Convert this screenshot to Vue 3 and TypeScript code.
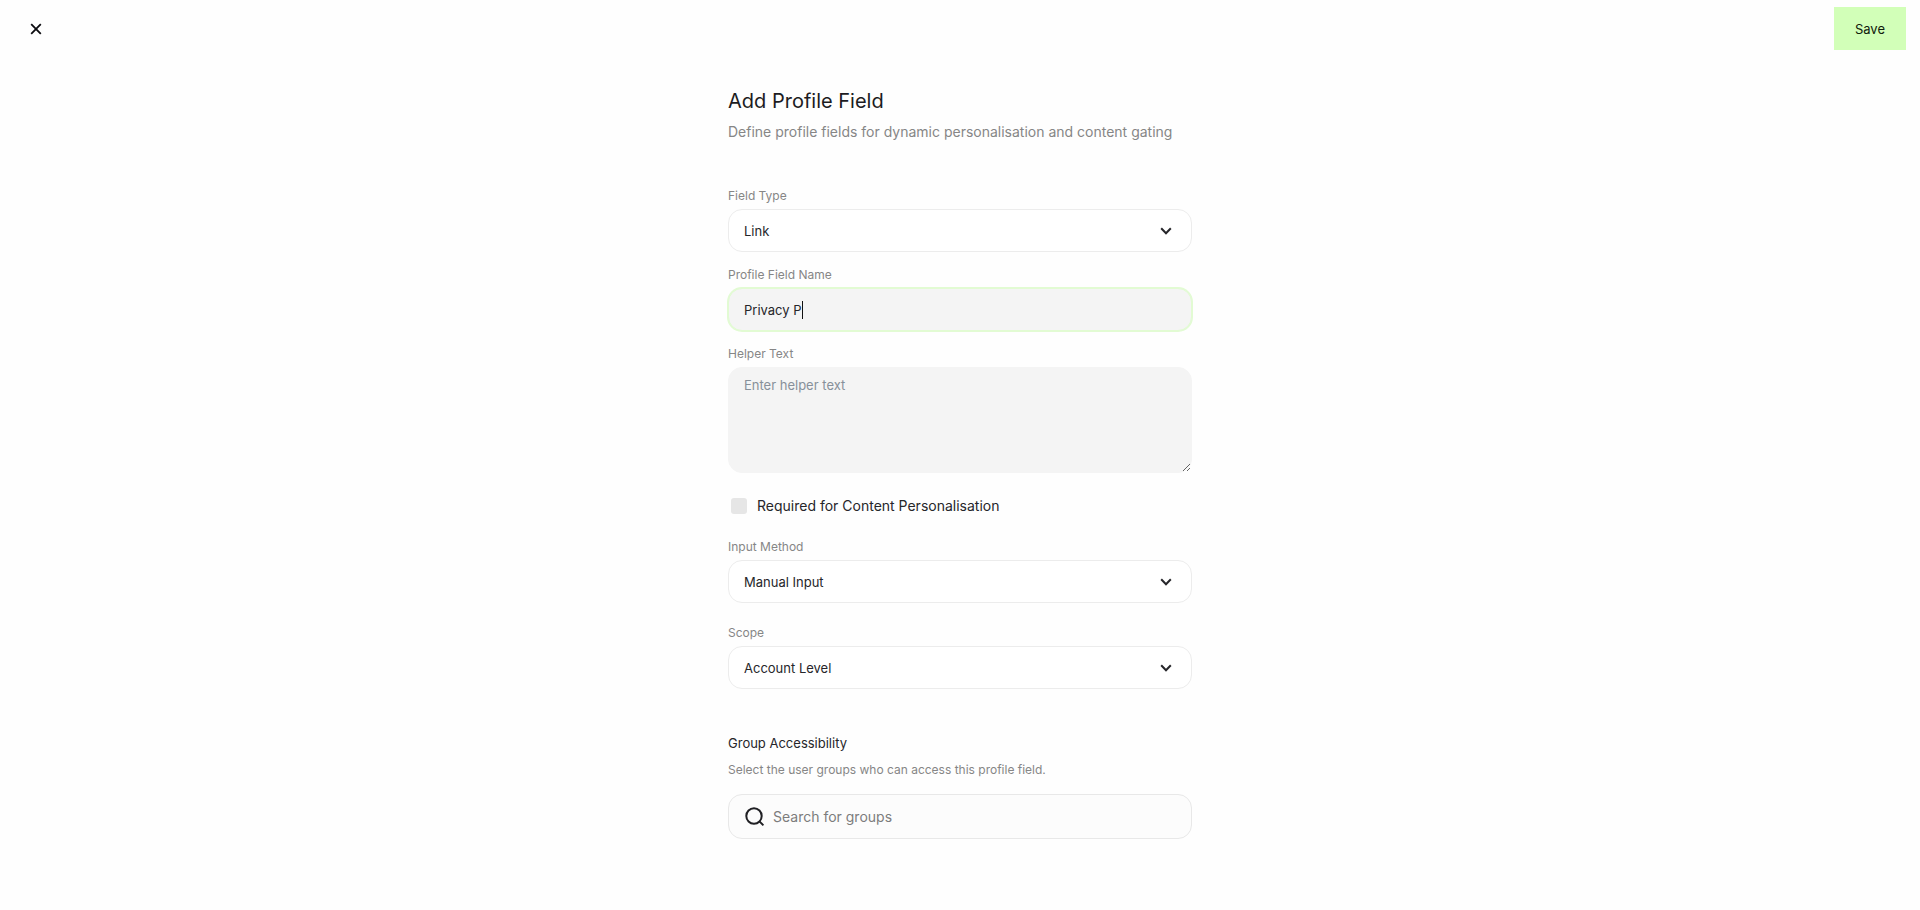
<script setup lang="ts">
import { onMounted, ref } from 'vue'

const fieldType = ref('Link')
const fieldName = ref('Privacy P')
const helperText = ref('')
const required = ref(false)
const inputMethod = ref('Manual Input')
const scope = ref('Account Level')
const groupSearch = ref('')

const fieldTypes: string[] = ['Link', 'Text', 'Number', 'Date']
const inputMethods: string[] = ['Manual Input', 'Automatic']
const scopes: string[] = ['Account Level', 'User Level']

const nameInput = ref<HTMLInputElement | null>(null)

onMounted(() => {
  const el = nameInput.value
  if (!el) return
  el.focus()
  el.setSelectionRange(el.value.length, el.value.length)
})
</script>

<template>
  <div class="page">
    <header class="topbar">
      <button class="close" type="button" aria-label="Close">
        <svg width="12" height="12" viewBox="0 0 12 12" aria-hidden="true">
          <path d="M1.2 1.2 10.8 10.8M10.8 1.2 1.2 10.8" fill="none" stroke="#0b0b0f" stroke-width="1.8" />
        </svg>
      </button>
      <button class="save" type="submit" form="profile-field">Save</button>
    </header>

    <form id="profile-field" class="form" @submit.prevent>
      <h1>Add Profile Field</h1>
      <p class="intro">Define profile fields for dynamic personalisation and content gating</p>

      <div class="field">
        <label for="type">Field Type</label>
        <div class="control">
          <select id="type" v-model="fieldType" class="box">
            <option v-for="o in fieldTypes" :key="o">{{ o }}</option>
          </select>
          <svg class="chevron" width="12" height="8" viewBox="0 0 12 8" aria-hidden="true">
            <path d="M1.2 1.2 6 6.2 10.8 1.2" />
          </svg>
        </div>
      </div>

      <div class="field">
        <label for="name">Profile Field Name</label>
        <div class="control">
          <input id="name" ref="nameInput" v-model="fieldName" class="box active" type="text" autocomplete="off" spellcheck="false" />
          <span class="caret-line" aria-hidden="true"><span class="ghost">{{ fieldName }}</span><span class="caret"></span></span>
        </div>
      </div>

      <div class="field">
        <label for="helper">Helper Text</label>
        <textarea id="helper" v-model="helperText" class="box" placeholder="Enter helper text"></textarea>
      </div>

      <div class="check">
        <input id="required" v-model="required" type="checkbox" />
        <label for="required">Required for Content Personalisation</label>
      </div>

      <div class="field method">
        <label for="method">Input Method</label>
        <div class="control">
          <select id="method" v-model="inputMethod" class="box">
            <option v-for="o in inputMethods" :key="o">{{ o }}</option>
          </select>
          <svg class="chevron" width="12" height="8" viewBox="0 0 12 8" aria-hidden="true">
            <path d="M1.2 1.2 6 6.2 10.8 1.2" />
          </svg>
        </div>
      </div>

      <div class="field">
        <label for="scope">Scope</label>
        <div class="control">
          <select id="scope" v-model="scope" class="box">
            <option v-for="o in scopes" :key="o">{{ o }}</option>
          </select>
          <svg class="chevron" width="12" height="8" viewBox="0 0 12 8" aria-hidden="true">
            <path d="M1.2 1.2 6 6.2 10.8 1.2" />
          </svg>
        </div>
      </div>

      <section class="groups">
        <h2><label for="groups">Group Accessibility</label></h2>
        <p>Select the user groups who can access this profile field.</p>
        <div class="search">
          <svg width="20" height="20" viewBox="0 0 20 20" aria-hidden="true">
            <circle cx="9" cy="9" r="7.7" />
            <path d="M14.4 14.4 18.4 18.4" />
          </svg>
          <input id="groups" v-model="groupSearch" type="search" placeholder="Search for groups" />
        </div>
      </section>
    </form>
  </div>
</template>

<style>
body {
  margin: 0;
  background: #fefefe;
}
</style>

<style scoped>
.page,
.page * {
  box-sizing: border-box;
}
.page {
  min-height: 100vh;
  background: #fefefe;
  color: #26262a;
  font-family: Inter, "Liberation Sans", sans-serif;
  font-size: 14px;
}
button,
input,
select,
textarea {
  margin: 0;
  font: inherit;
  color: inherit;
}
.topbar {
  display: flex;
  align-items: flex-start;
  justify-content: space-between;
  padding: 7px 14px 0 24px;
}
.close {
  display: grid;
  place-items: center;
  width: 24px;
  height: 43px;
  padding: 0;
  border: 0;
  background: none;
  cursor: pointer;
}
.save {
  height: 43px;
  padding: 0 21px;
  border: 0;
  background: #d2ffb8;
  color: #10200c;
  font-size: 13px;
  cursor: pointer;
}
.form {
  width: 464px;
  max-width: 100%;
  margin: 0 auto;
  padding: 37px 0 48px;
}
h1 {
  margin: 0;
  font-size: 20px;
  line-height: 28px;
  font-weight: 400;
  color: #1c1c22;
}
.intro {
  margin: 7px 0 46px;
  font-size: 14px;
  line-height: 20px;
  color: #868686;
}
.field {
  display: flex;
  flex-direction: column;
  gap: 5px;
  margin-bottom: 15px;
}
.field > label {
  font-size: 12px;
  line-height: 16px;
  color: #868686;
}
.control {
  position: relative;
  font-size: 13px;
}
.box {
  display: block;
  width: 100%;
  height: 43px;
  padding: 0 15px;
  border: 1px solid #ececec;
  border-radius: 14px;
  background: #fff;
  outline: none;
  appearance: none;
}
.box.active {
  border-color: #e2fbd3;
  background: #f4f4f4;
  box-shadow: 0 0 0 1px #e2fbd3;
  caret-color: transparent;
}
.chevron {
  position: absolute;
  top: 18px;
  right: 20px;
  pointer-events: none;
}
.chevron path {
  fill: none;
  stroke: #26262a;
  stroke-width: 2;
}
.caret-line {
  position: absolute;
  inset: 0 16px;
  display: flex;
  align-items: center;
  overflow: hidden;
  pointer-events: none;
  white-space: pre;
}
.ghost {
  visibility: hidden;
}
.caret {
  width: 1px;
  height: 18px;
  background: #111;
}
textarea.box {
  height: 106px;
  padding: 7px 15px;
  border-color: #f4f4f4;
  background: #f4f4f4;
  font-size: 13px;
  line-height: 20px;
  resize: vertical;
}
textarea::placeholder {
  color: #87909a;
  opacity: 1;
}
.check {
  display: flex;
  align-items: center;
  gap: 10px;
  margin: 23px 0;
  padding-left: 3px;
  line-height: 20px;
}
.check input {
  width: 16px;
  height: 16px;
  border-radius: 3px;
  background: #e6e6e6;
  appearance: none;
}
.check input:checked {
  background: #7ccf4c;
}
.field.method {
  margin-bottom: 22px;
}
.groups {
  margin-top: 44px;
}
h2 {
  margin: 0;
  font-size: 13px;
  line-height: 20px;
  font-weight: 400;
}
.groups p {
  margin: 9px 0 16px;
  font-size: 12px;
  line-height: 16px;
  color: #868686;
}
.search {
  display: flex;
  align-items: center;
  gap: 8px;
  height: 45px;
  padding: 0 16px;
  border: 1px solid #e8e8e8;
  border-radius: 14px;
  background: #fcfcfc;
}
.search svg {
  flex: none;
  fill: none;
  stroke: #202024;
  stroke-width: 2;
}
.search input {
  flex: 1;
  min-width: 0;
  padding: 0;
  border: 0;
  outline: none;
  background: none;
  appearance: none;
}
.search input::placeholder {
  color: #7c7c7c;
  opacity: 1;
}
</style>
